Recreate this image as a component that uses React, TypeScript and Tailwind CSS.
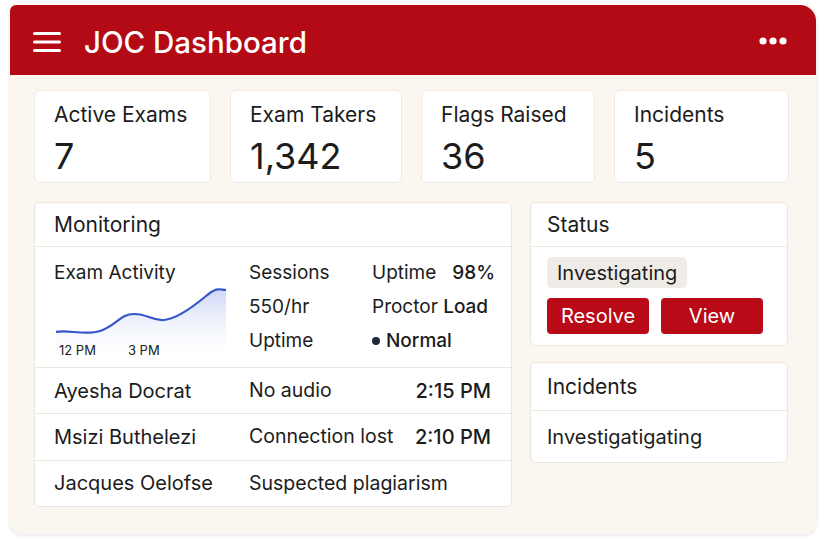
const stats = [
  { label: "Active Exams", value: "7", w: "w-[177px]" },
  { label: "Exam Takers", value: "1,342", w: "w-[172px]" },
  { label: "Flags Raised", value: "36", w: "w-[174px]" },
  { label: "Incidents", value: "5", w: "w-[175px]" },
];

const rows = [
  { name: "Ayesha Docrat", issue: "No audio", time: "2:15 PM" },
  { name: "Msizi Buthelezi", issue: "Connection lost", time: "2:10 PM" },
  { name: "Jacques Oelofse", issue: "Suspected plagiarism", time: "" },
];

const Chart = () => {
  const line =
    "M0 46 C 12 43, 28 50, 44 45 S 64 28, 78 28 S 96 35, 108 34 S 138 20, 150 10 S 164 4, 170 4";
  return (
    <svg width="170" height="78" viewBox="0 0 170 78" className="block">
      <defs>
        <linearGradient id="fillG" x1="0" y1="0" x2="0" y2="1">
          <stop offset="0%" stopColor="#c7d2f4" stopOpacity="0.9" />
          <stop offset="100%" stopColor="#ffffff" stopOpacity="0" />
        </linearGradient>
      </defs>
      <path d={`${line} L170 78 L0 78 Z`} fill="url(#fillG)" />
      <path d={line} fill="none" stroke="#3656c9" strokeWidth="2.2" strokeLinecap="round" />
    </svg>
  );
};

const App = () => {
  return (
    <div className="w-[830px] h-[540px] bg-white pt-[5px] pl-[10px] font-['Inter',sans-serif] text-[#1c1c1c]">
      <div className="w-[806px] h-[529px] bg-[#fcf6f1] rounded-tl-md rounded-tr-2xl rounded-b-xl shadow-[0_1px_4px_rgba(0,0,0,0.12)] flex flex-col">
        {/* header */}
        <header className="h-[70px] bg-[#b40a15] rounded-tl-md rounded-tr-2xl flex items-center pl-[23px] pr-[29px] pt-[4px] text-white">
          <svg width="28" height="20" viewBox="0 0 28 20">
            <rect x="0" y="0" width="28" height="3" rx="1.5" fill="white" />
            <rect x="0" y="8.5" width="28" height="3" rx="1.5" fill="white" />
            <rect x="0" y="17" width="28" height="3" rx="1.5" fill="white" />
          </svg>
          <h1 className="ml-[23px] text-[29.5px] font-medium">JOC Dashboard</h1>
          <svg width="28" height="8" viewBox="0 0 28 8" className="ml-auto -mt-[3px]">
            <circle cx="4" cy="4" r="3.6" fill="white" />
            <circle cx="14" cy="4" r="3.6" fill="white" />
            <circle cx="24" cy="4" r="3.6" fill="white" />
          </svg>
        </header>

        <main className="px-[24px] pt-[15px]">
          {/* stat cards */}
          <div className="flex gap-[19px]">
            {stats.map((s) => (
              <div
                key={s.label}
                className={`${s.w} h-[93px] bg-white rounded-md border border-[#efe9e4] pl-[19px] pt-[11px]`}
              >
                <div className="text-[21px] leading-[26px]">{s.label}</div>
                <div className="text-[36px] leading-[44px] mt-[6px]">{s.value}</div>
              </div>
            ))}
          </div>

          <div className="flex gap-[18px] mt-[19px]">
            {/* monitoring */}
            <section className="w-[478px] h-[305px] bg-white rounded-md border border-[#ece6e1] flex flex-col">
              <div className="h-[44px] flex items-center pl-[19px] text-[21px] border-b border-[#ece7e3]">
                Monitoring
              </div>
              <div className="h-[121px] flex pl-[19px] pt-[13px] border-b border-[#ece7e3] text-[19px]">
                <div className="w-[195px]">
                  <div className="leading-[26px]">Exam Activity</div>
                  <div className="relative ml-[2px]">
                    <Chart />
                    <div className="absolute left-[3px] top-[56px] flex gap-[32px] text-[13px] leading-[16px]">
                      <span>12 PM</span>
                      <span>3 PM</span>
                    </div>
                  </div>
                </div>
                <div className="w-[123px] flex flex-col gap-[8px] leading-[26px]">
                  <span>Sessions</span>
                  <span>550/hr</span>
                  <span>Uptime</span>
                </div>
                <div className="w-[123px] flex flex-col gap-[8px] leading-[26px]">
                  <div className="flex justify-between">
                    <span>Uptime</span>
                    <span className="font-medium">98%</span>
                  </div>
                  <span>
                    Proctor <span className="font-medium">Load</span>
                  </span>
                  <span className="flex items-center font-medium">
                    <span className="w-[8px] h-[8px] rounded-full bg-[#1f2a3a] mr-[6px]" />
                    Normal
                  </span>
                </div>
              </div>
              {rows.map((r, i) => (
                <div
                  key={r.name}
                  className={`flex-1 flex items-center pl-[19px] pr-[20px] text-[20px] ${
                    i < rows.length - 1 ? "border-b border-[#ece7e3]" : ""
                  }`}
                >
                  <span className="w-[195px]">{r.name}</span>
                  <span className="text-[19.5px]">{r.issue}</span>
                  <span className="ml-auto font-medium">{r.time}</span>
                </div>
              ))}
            </section>

            {/* right column */}
            <div className="w-[258px] flex flex-col gap-[16px]">
              <section className="h-[144px] bg-white rounded-md border border-[#ece6e1]">
                <div className="h-[44px] flex items-center pl-[16px] text-[21px] border-b border-[#ece7e3]">
                  Status
                </div>
                <div className="pl-[16px] pt-[10px]">
                  <span className="inline-flex items-center h-[31px] px-[10px] rounded-[5px] bg-[#efebe7] text-[20px]">
                    Investigating
                  </span>
                  <div className="flex gap-[12px] mt-[10px]">
                    <button className="w-[102px] h-[36px] rounded-[4px] bg-[#b80b17] text-white text-[20px]">
                      Resolve
                    </button>
                    <button className="w-[102px] h-[36px] rounded-[4px] bg-[#b80b17] text-white text-[20px]">
                      View
                    </button>
                  </div>
                </div>
              </section>
              <section className="h-[101px] bg-white rounded-md border border-[#ece6e1]">
                <div className="h-[48px] flex items-center pl-[16px] text-[21px] border-b border-[#ece7e3]">
                  Incidents
                </div>
                <div className="h-[51px] flex items-center pl-[16px] text-[20px]">Investigatigating</div>
              </section>
            </div>
          </div>
        </main>
      </div>
    </div>
  );
};

export default App;
